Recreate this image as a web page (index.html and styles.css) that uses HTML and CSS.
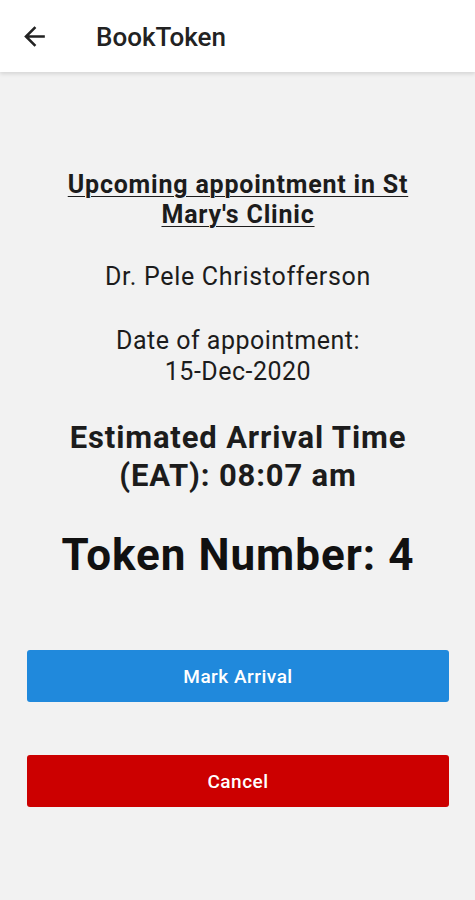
FILE: index.html
```html
<!DOCTYPE html>
<html lang="en">
<head>
<meta charset="utf-8">
<title>BookToken</title>
<link rel="stylesheet" href="styles.css">
</head>
<body>
<header class="appbar">
  <button class="back" aria-label="Back">
    <svg viewBox="0 0 24 24" width="31" height="31"><path d="M20 11H7.83l5.59-5.59L12 4l-8 8 8 8 1.41-1.41L7.83 13H20v-2z" fill="#222"/></svg>
  </button>
  <h1 class="title">BookToken</h1>
</header>
<main class="content">
  <h2 class="heading">Upcoming appointment in St Mary's Clinic</h2>
  <p class="doctor">Dr. Pele Christofferson</p>
  <p class="date">Date of appointment:<br>15-Dec-2020</p>
  <p class="eat">Estimated Arrival Time (EAT): 08:07 am</p>
  <p class="token">Token Number: 4</p>
  <div class="actions">
    <button class="btn btn-primary">Mark Arrival</button>
    <button class="btn btn-danger">Cancel</button>
  </div>
</main>
</body>
</html>
```
FILE: styles.css
```css
* { box-sizing: border-box; }
html, body { margin: 0; padding: 0; }
body {
  width: 475px;
  height: 900px;
  background: #f2f2f2;
  font-family: Roboto, "Noto Sans", sans-serif;
  color: #1c1c1c;
  overflow: hidden;
}
.appbar {
  height: 72px;
  background: #ffffff;
  display: flex;
  align-items: center;
  box-shadow: 0 2px 4px rgba(0,0,0,0.12);
  position: relative;
}
.back {
  border: 0;
  background: none;
  padding: 0;
  margin-left: 19px;
  width: 31px;
  height: 31px;
  display: flex;
  align-items: center;
  justify-content: center;
}
.title {
  margin: 2px 0 0 46px;
  font-size: 26px;
  font-weight: 500;
  color: #222;
}
.content {
  display: flex;
  flex-direction: column;
  align-items: center;
  text-align: center;
  padding: 0 26px 0 27px;
}
.heading {
  margin: 98px 34px 0;
  font-size: 25px;
  line-height: 30px;
  font-weight: 700;
  letter-spacing: 0.8px;
  text-decoration: underline;
  text-underline-offset: 3px;
  text-decoration-thickness: 1px;
}
.doctor {
  margin: 32px 0 0;
  font-size: 25px;
  line-height: 30px;
  letter-spacing: 0.7px;
}
.date {
  margin: 33px 0 0;
  font-size: 25px;
  line-height: 31px;
  letter-spacing: 0.5px;
}
.eat {
  margin: 32px 38px 0;
  font-size: 31px;
  line-height: 38px;
  font-weight: 700;
  letter-spacing: 0.85px;
}
.token {
  margin: 35px 0 0;
  font-size: 44px;
  line-height: 50px;
  font-weight: 700;
  letter-spacing: 1px;
  color: #111;
}
.actions {
  align-self: stretch;
  display: flex;
  flex-direction: column;
  gap: 53px;
  margin-top: 70px;
}
.btn {
  height: 52px;
  border: 0;
  border-radius: 3px;
  color: #fff;
  font-family: Roboto, "Noto Sans", sans-serif;
  font-size: 19px;
  font-weight: 500;
  letter-spacing: 0.5px;
}
.btn-primary { background: #2089dc; }
.btn-danger { background: #cc0000; }
```
